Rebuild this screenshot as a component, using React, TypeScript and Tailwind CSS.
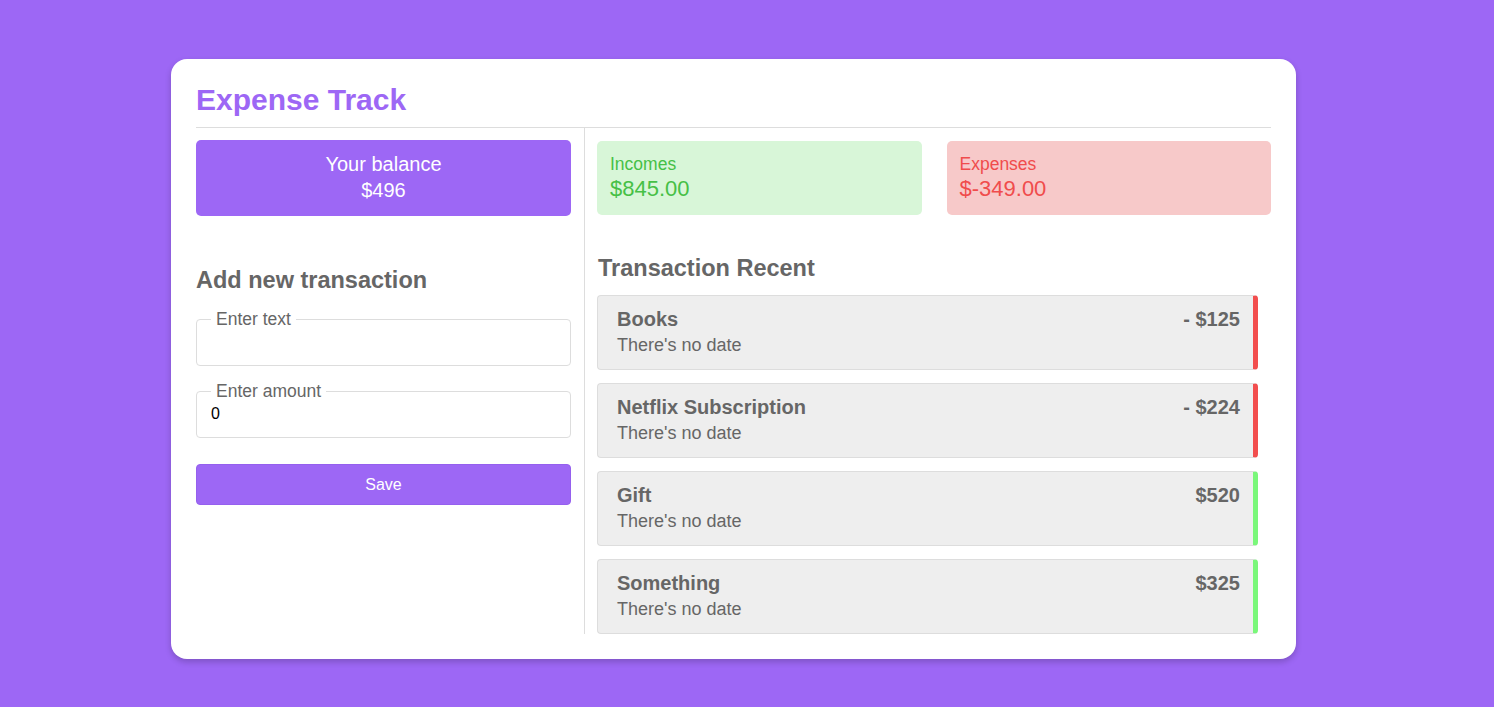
const transactions = [
  { name: "Books", amount: "- $125", type: "expense" },
  { name: "Netflix Subscription", amount: "- $224", type: "expense" },
  { name: "Gift", amount: "$520", type: "income" },
  { name: "Something", amount: "$325", type: "income" },
];

export default function App() {
  return (
    <div className="min-h-[707px] bg-[#9d67f5] pt-[59px] font-['Liberation_Sans',Arial,sans-serif] text-[#666]">
      <div className="ml-[171px] w-[1125px] rounded-[16px] bg-white px-[25px] pt-[24px] pb-[25px] shadow-[0_3px_6px_rgba(0,0,0,0.2)]">
        <h1 className="border-b border-[#ddd] pb-[10px] text-[30px] leading-[34px] font-bold text-[#9d67f5]">
          Expense Track
        </h1>
        <div className="flex">
          <div className="w-[389px] border-r border-[#ddd] pt-[12px] pr-[13px]">
            <div className="rounded-[5px] bg-[#9d67f5] pt-[11px] pb-[13px] text-center text-[20px] leading-[26px] text-white">
              <div>Your balance</div>
              <div>$496</div>
            </div>
            <h2 className="mt-[50px] text-[23.5px] leading-[28px] font-bold">Add new transaction</h2>
            <fieldset className="mt-[15px] rounded-[4px] border border-[#ddd] px-[14px] pb-[11px]">
              <legend className="px-[5px] text-[17.5px] leading-[20px]">Enter text</legend>
              <input className="h-[25px] w-full text-[16px] text-black outline-none" />
            </fieldset>
            <fieldset className="mt-[15px] rounded-[4px] border border-[#ddd] px-[14px] pb-[11px]">
              <legend className="px-[5px] text-[17.5px] leading-[20px]">Enter amount</legend>
              <input
                className="h-[25px] w-full text-[16px] text-black outline-none"
                defaultValue="0"
              />
            </fieldset>
            <button className="mt-[26px] h-[41px] w-full rounded-[4px] border border-[#9560ee] bg-[#9d67f5] text-[16px] text-white">
              Save
            </button>
          </div>
          <div className="flex-1 pt-[13px] pl-[12px]">
            <div className="flex gap-[25px]">
              <div className="flex-1 rounded-[5px] bg-[#d8f6d8] px-[13px] pt-[12px] pb-[12px] text-[#46c046]">
                <div className="text-[17.5px] leading-[22px]">Incomes</div>
                <div className="text-[22px] leading-[28px]">$845.00</div>
              </div>
              <div className="flex-1 rounded-[5px] bg-[#f7c9c9] px-[13px] pt-[12px] pb-[12px] text-[#f04c4c]">
                <div className="text-[17.5px] leading-[22px]">Expenses</div>
                <div className="text-[22px] leading-[28px]">$-349.00</div>
              </div>
            </div>
            <h2 className="mt-[39px] pl-[1px] text-[23.5px] leading-[28px] font-bold">Transaction Recent</h2>
            <div className="mt-[13px] mr-[13px] flex flex-col gap-[13px]">
              {transactions.map((t) => (
                <div
                  key={t.name}
                  className={`flex h-[75px] justify-between rounded-[4px] border border-r-[5px] border-[#ddd] bg-[#eee] pt-[11px] pr-[13px] pl-[19px] ${
                    t.type === "expense" ? "border-r-[#f24e4e]" : "border-r-[#7af77a]"
                  }`}
                >
                  <div>
                    <div className="text-[20px] leading-[24px] font-bold">{t.name}</div>
                    <div className="mt-[2px] text-[18px] leading-[24px]">There's no date</div>
                  </div>
                  <div className="text-[20px] leading-[24px] font-bold">{t.amount}</div>
                </div>
              ))}
            </div>
          </div>
        </div>
      </div>
    </div>
  );
}
